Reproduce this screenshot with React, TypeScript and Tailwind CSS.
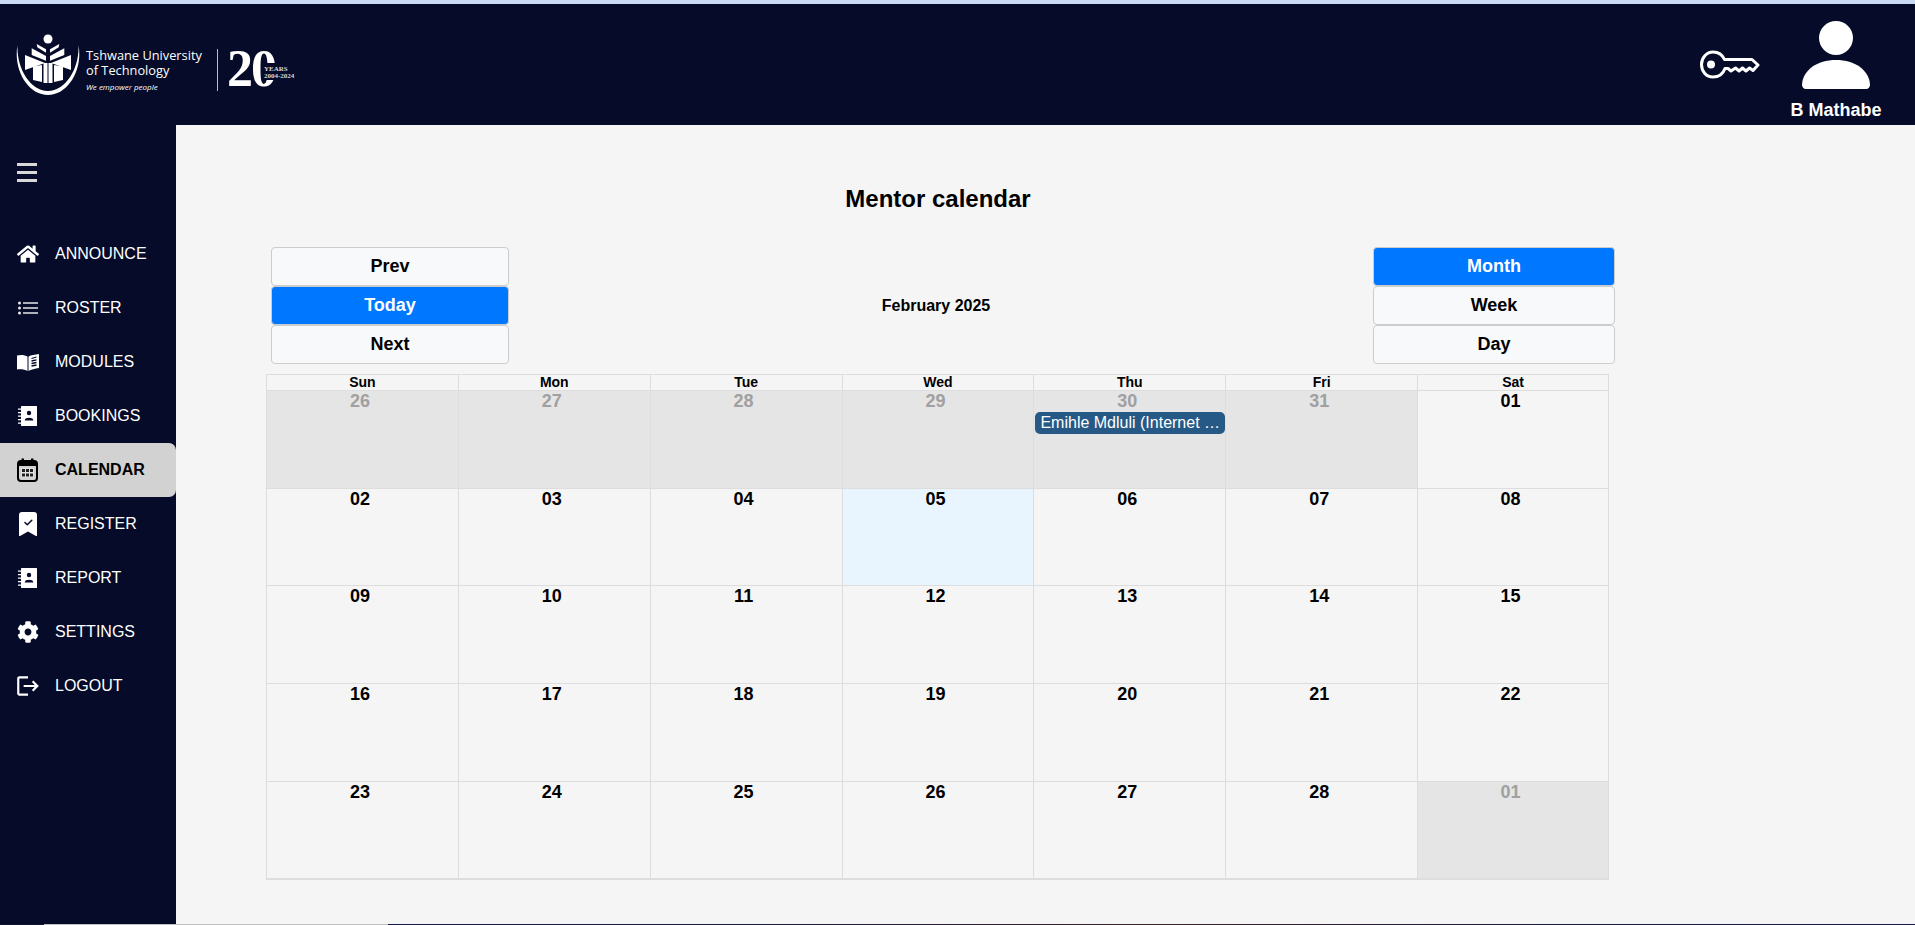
import { BsBookmarkCheckFill } from "react-icons/bs"
import { FaCog, FaHome } from "react-icons/fa"
import { MdLogout } from "react-icons/md"
import type { ReactNode } from "react"

const FONT = "font-['Liberation_Sans',Arial,sans-serif]"

function CalendarIcon() {
    return (
        <svg viewBox="0 0 21 24" className="w-[21px] h-[24px]">
            <rect x="1" y="3" width="19" height="20" rx="3" fill="#d2d2d2" stroke="#000" strokeWidth="2" />
            <path d="M1 6a3 3 0 0 1 3-3h13a3 3 0 0 1 3 3v2H1z" fill="#000" />
            <path d="M4.500 0.500h2.500v5h-2.500zM14 0.500h2.500v5h-2.500z" fill="#000" />
            <rect x="4" y="10" width="13" height="9.500" fill="#e4e4e4" />
            <path d="M5 11h3v3h-3zM9 11h3v3h-3zM13 11h3v3h-3zM5 15.500h3v3h-3zM9 15.500h3v3h-3zM13 15.500h3v3h-3z" fill="#222" />
        </svg>
    )
}

function ListIcon() {
    return (
        <svg viewBox="0 0 20 14" className="w-[20px] h-[14px]" fill="#e8e8e8">
            <circle cx="1.500" cy="2" r="1.500" />
            <circle cx="1.500" cy="7" r="1.500" />
            <circle cx="1.500" cy="12" r="1.500" />
            <path d="M5 1.200h15v1.600H5zM5 6.200h15v1.600H5zM5 11.200h15v1.600H5z" />
        </svg>
    )
}

function BookIcon() {
    return (
        <svg viewBox="0 0 22 17" className="w-[22px] h-[17px]">
            <path d="M0 1.500C4 .5 8 1 10.500 2.500V17C8 15.500 4 15 0 15.500z" fill="#fff" />
            <path d="M22 0C18 .5 14 1 11.500 2.500V17C14 15.500 18 14.500 22 14z" fill="#fff" />
            <path d="M14.500 4.500l5-1.500M14.500 7l5-1.200M14.500 9.500l5-1M14.500 12l5-1" stroke="#050b28" strokeWidth="1.300" fill="none" />
        </svg>
    )
}

function ContactBookIcon() {
    return (
        <svg viewBox="0 0 19 20" className="w-[19px] h-[20px]">
            <rect x="3" y="0" width="16" height="20" rx="0.500" fill="#fff" />
            <path d="M0 2.500h4v1.200H0zM0 6h4v1.200H0zM0 9.500h4v1.200H0zM0 13h4v1.200H0zM0 16.500h4v1.200H0z" fill="#fff" />
            <circle cx="11" cy="7" r="2.200" fill="#050b28" />
            <path d="M6.800 14c0-3 8.400-3 8.400 0v.5H6.800z" fill="#050b28" />
        </svg>
    )
}

function KeyIcon() {
    return (
        <svg viewBox="0 0 60 30" className="w-[60px] h-[30px]" fill="none" stroke="#fff" strokeWidth="3" strokeLinejoin="round">
            <path d="M13 2C18.500 2 22.500 5 24.500 9.500H52L58 15L53 20.500L49.500 18L46 21L42.500 18L39 21L35.500 18L31 21L28 18.500H25C23 24 18.500 27 13 27C6 27 1.500 21 1.500 14.500C1.500 8 6.500 2 13 2Z" />
            <circle cx="11" cy="14.500" r="4" fill="#fff" stroke="none" />
        </svg>
    )
}

function PersonIcon() {
    return (
        <svg viewBox="0 0 68 68" className="w-[68px] h-[68px]" fill="#fff">
            <circle cx="34" cy="17" r="17" />
            <path d="M4 68c-2.500 0-4-2-4-4.500C1 49 15 39 34 39s33 10 34 24.500c0 2.500-1.500 4.500-4 4.500z" />
        </svg>
    )
}

function TutLogo() {
    return (
        <div className="flex items-start text-white">
            <svg viewBox="0 0 66 62" className="w-[66px] h-[62px] shrink-0" fill="#fff">
                <circle cx="32" cy="5" r="4.500" />
                <path d="M1.500 11C-3 36 12 61 32 61C52 61 67 36 62.500 11C63.500 34 50 56.500 32 57C14 56.500 .5 34 1.500 11Z" />
                <path d="M20.700 10L30 15.300V18.700L21.300 13.300ZM43.300 10L34 15.300V18.700L42.700 13.300Z" />
                <path d="M15.700 14.300L30 22V26.700L15.700 21ZM48.300 14.300L34 22V26.700L48.300 21Z" />
                <path d="M9 21L29 29L9 36ZM55 21L35 29L55 36Z" />
                <path d="M17 32.500L26 31V48L17 46ZM27.500 29H31.500V49H27.500ZM32.500 29H36.500V49H32.500ZM38 31L47 32.500V46L38 48Z" />
            </svg>
            <div className="ml-[4px] w-[131px] mt-[14px] shrink-0 font-['Open_Sans',sans-serif]">
                <div className="text-[12.800px] leading-[15px] font-medium whitespace-nowrap">Tshwane University</div>
                <div className="text-[12.800px] leading-[15px] font-medium whitespace-nowrap">of Technology</div>
                <div className="text-[8px] leading-[12px] mt-[3px] italic whitespace-nowrap">We empower people</div>
            </div>
            <div className="w-px h-[42px] mt-[15px] bg-[#b9bcc8] shrink-0" />
            <div className="relative ml-[9px] mt-[17px] w-[68px] h-[36px] shrink-0">
                <span className="font-['Liberation_Serif',serif] font-bold text-[52px] leading-[36px] tracking-[-2px]">20</span>
                <div className="absolute left-[37px] top-[12px] h-[17px] bg-[#050b28] pt-[3px] font-['Liberation_Serif',serif] font-bold text-[7px] leading-[7px] text-[#d8d8d8]">
                    <div>YEARS</div>
                    <div className="whitespace-nowrap">2004-2024</div>
                </div>
            </div>
        </div>
    )
}

const navItems: { label: string; icon: ReactNode; active?: boolean }[] = [
    { label: "ANNOUNCE", icon: <FaHome className="w-[22px] h-[22px]" /> },
    { label: "ROSTER", icon: <div className="ml-[1px]"><ListIcon /></div> },
    { label: "MODULES", icon: <BookIcon /> },
    { label: "BOOKINGS", icon: <div className="ml-[1px]"><ContactBookIcon /></div> },
    { label: "CALENDAR", icon: <CalendarIcon />, active: true },
    { label: "REGISTER", icon: <BsBookmarkCheckFill className="w-[24px] h-[24px] -ml-[1px]" /> },
    { label: "REPORT", icon: <div className="ml-[1px]"><ContactBookIcon /></div> },
    { label: "SETTINGS", icon: <FaCog className="w-[22px] h-[22px]" /> },
    { label: "LOGOUT", icon: <MdLogout className="w-[26px] h-[26px] -ml-[2px]" /> },
]

const dayNames = ["Sun", "Mon", "Tue", "Wed", "Thu", "Fri", "Sat"]

type DayCell = { day: string; muted?: boolean; today?: boolean; event?: string }

const weeks: { height: string; cells: DayCell[] }[] = [
    {
        height: "h-[98px]",
        cells: [
            { day: "26", muted: true },
            { day: "27", muted: true },
            { day: "28", muted: true },
            { day: "29", muted: true },
            { day: "30", muted: true, event: "Emihle Mdluli (Internet Marketing)" },
            { day: "31", muted: true },
            { day: "01" },
        ],
    },
    { height: "h-[97px]", cells: ["02", "03", "04", "05", "06", "07", "08"].map((day) => ({ day, today: day === "05" })) },
    { height: "h-[98px]", cells: ["09", "10", "11", "12", "13", "14", "15"].map((day) => ({ day })) },
    { height: "h-[98px]", cells: ["16", "17", "18", "19", "20", "21", "22"].map((day) => ({ day })) },
    {
        height: "h-[96px]",
        cells: [...["23", "24", "25", "26", "27", "28"].map((day) => ({ day })), { day: "01", muted: true }],
    },
]

function ToolbarButton({ label, active }: { label: string; active?: boolean }) {
    return (
        <button
            className={`h-[39px] w-full rounded-[4px] border border-[#cccccc] text-[18px] font-bold ${
                active ? "bg-[#0077ff] text-white" : "bg-[#f8f9fa] text-black"
            }`}
        >
            {label}
        </button>
    )
}

export default function App() {
    return (
        <div className={`${FONT} h-screen flex flex-col overflow-hidden bg-[#f5f5f5]`}>
            <div className="h-[4px] shrink-0 bg-[#c9daf5]" />
            <header className="h-[121px] shrink-0 bg-[#050b28] flex items-start justify-between">
                <div className="pl-[16px] pt-[30px]">
                    <TutLogo />
                </div>
                <div className="flex items-start">
                    <div className="mt-[46px] mr-[21px]">
                        <KeyIcon />
                    </div>
                    <div className="w-[110px] mr-[24px] flex flex-col items-center pt-[17px]">
                        <PersonIcon />
                        <div className="text-white font-bold text-[18px] leading-[20px] mt-[11px] whitespace-nowrap">B Mathabe</div>
                    </div>
                </div>
            </header>
            <div className="flex-1 flex min-h-0">
                <aside className="w-[176px] shrink-0 bg-[#050b28]">
                    <div className="pl-[17px] pt-[38px] h-[102px]">
                        <div className="w-[20px] flex flex-col gap-[5px]">
                            <div className="h-[3px] bg-[#d8d8d8]" />
                            <div className="h-[3px] bg-[#d8d8d8]" />
                            <div className="h-[3px] bg-[#d8d8d8]" />
                        </div>
                    </div>
                    <nav>
                        {navItems.map((item) => (
                            <div
                                key={item.label}
                                className={`h-[54px] flex items-center rounded-r-[7px] ${
                                    item.active ? "bg-[#d2d2d2] text-black font-bold" : "text-white"
                                }`}
                            >
                                <div className="w-[55px] pl-[17px] flex justify-start">{item.icon}</div>
                                <span className="text-[16px] pb-[1px]">{item.label}</span>
                            </div>
                        ))}
                    </nav>
                </aside>
                <main className="flex-1 pl-[90px]">
                    <div className="w-[1344px]">
                        <h1 className="text-center text-[24px] leading-[28px] font-bold text-black pt-[60px] h-[122px]">
                            Mentor calendar
                        </h1>
                        <div className="flex items-center justify-between pl-[5px]">
                            <div className="w-[238px] flex flex-col">
                                <ToolbarButton label="Prev" />
                                <ToolbarButton label="Today" active />
                                <ToolbarButton label="Next" />
                            </div>
                            <div className="text-[16px] font-bold text-black mr-[10px]">February 2025</div>
                            <div className="w-[242px] -mr-[5px] flex flex-col">
                                <ToolbarButton label="Month" active />
                                <ToolbarButton label="Week" />
                                <ToolbarButton label="Day" />
                            </div>
                        </div>
                        <div className="mt-[10px] w-[1343px] border-t border-b-2 border-[#dddddd]">
                            <div className="grid grid-cols-7 h-[16px]">
                                {dayNames.map((name, i) => (
                                    <div
                                        key={name}
                                        className={`text-center text-[14px] leading-[15px] font-bold text-black border-b border-l border-[#dddddd] ${i === 6 ? "border-r" : ""}`}
                                    >
                                        {name}
                                    </div>
                                ))}
                            </div>
                            {weeks.map((week, w) => (
                                <div key={w} className={`grid grid-cols-7 ${week.height}`}>
                                    {week.cells.map((cell, i) => (
                                        <div
                                            key={i}
                                            className={`min-w-0 border-l border-[#dddddd] ${i === 6 ? "border-r" : ""} ${w < 4 ? "border-b" : ""} ${
                                                cell.muted ? "bg-[#e5e5e5]" : cell.today ? "bg-[#e8f5ff]" : ""
                                            }`}
                                        >
                                            <div className={`text-center text-[18px] leading-[20px] font-bold pr-[5px] ${cell.muted ? "text-[#a0a0a0]" : "text-black"}`}>
                                                {cell.day}
                                            </div>
                                            {cell.event && (
                                                <div className="ml-[1px] mr-0 mt-[1px] h-[22px] rounded-[5px] bg-[#265985] text-white text-[16px] leading-[21px] pl-[5px] pr-[3px] truncate">
                                                    {cell.event}
                                                </div>
                                            )}
                                        </div>
                                    ))}
                                </div>
                            ))}
                        </div>
                    </div>
                </main>
            </div>
            <div className="h-[1px] shrink-0 flex">
                <div className="w-[44px] bg-[#10142c]" />
                <div className="w-[344px] bg-[#c0c0c0]" />
                <div className="flex-1 bg-[linear-gradient(90deg,#17174a,#1a1a3c_25%,#3a2428_50%,#1a1a3c_75%,#17174a)]" />
            </div>
        </div>
    )
}
